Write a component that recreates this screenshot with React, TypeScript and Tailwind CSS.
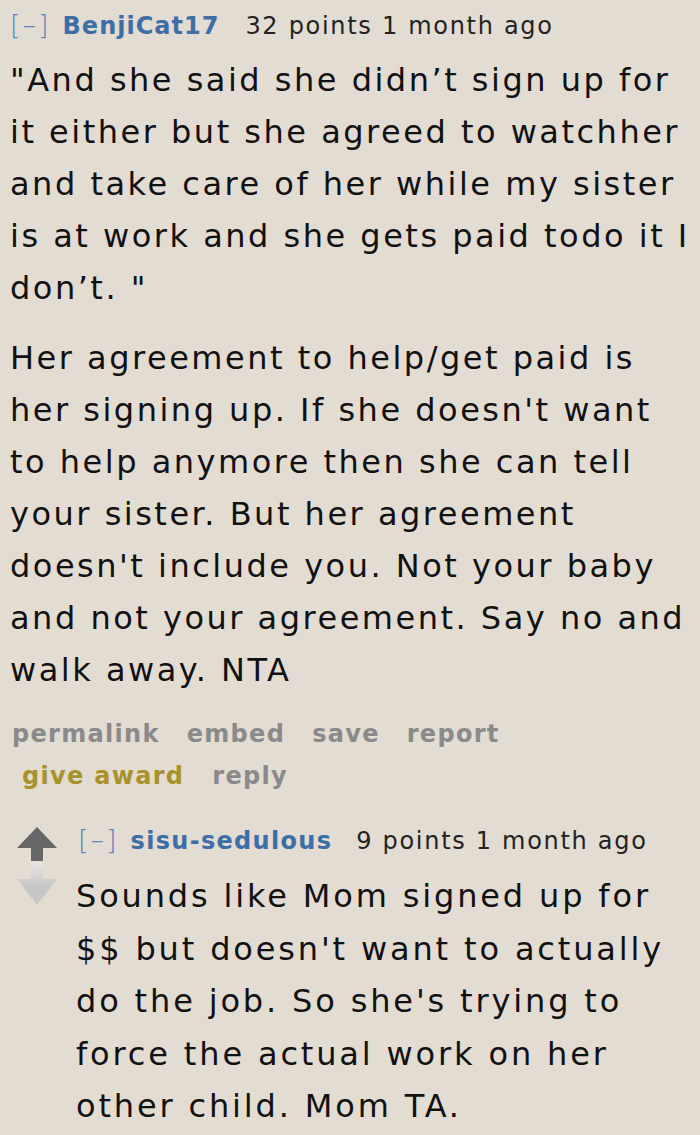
import React from "react";

const p1 = [
  "\"And she said she didn’t sign up for",
  "it either but she agreed to watchher",
  "and take care of her while my sister",
  "is at work and she gets paid todo it I",
  "don’t. \"",
];
const p2 = [
  "Her agreement to help/get paid is",
  "her signing up. If she doesn't want",
  "to help anymore then she can tell",
  "your sister. But her agreement",
  "doesn't include you. Not your baby",
  "and not your agreement. Say no and",
  "walk away. NTA",
];
const p3 = [
  "Sounds like Mom signed up for",
  "$$ but doesn't want to actually",
  "do the job. So she's trying to",
  "force the actual work on her",
  "other child. Mom TA.",
];

function Lines({ lines }: { lines: string[] }) {
  return (
    <div>
      {lines.map((l, i) => (
        <div key={i} className="whitespace-pre">
          {l}
        </div>
      ))}
    </div>
  );
}

export default function App() {
  return (
    <div
      className="w-[700px] h-[1135px] overflow-hidden bg-[#e3dcd3] text-[#111]"
      style={{ fontFamily: '"DejaVu Sans", Verdana, sans-serif' }}
    >
      {/* Parent comment */}
      <div className="pl-[10px] pt-[8px]">
        <div className="flex items-baseline text-[24px] leading-[34px]">
          <span className="text-[#5b87b8] text-[27px] tracking-[2px] font-light">[–]</span>
          <span className="ml-[12px] font-bold text-[24px] text-[#3d6fa6] tracking-[1px]">BenjiCat17</span>
          <span className="ml-[26px] text-[#222] tracking-[1.7px]">32 points 1 month ago</span>
        </div>
        <div className="mt-[11px] text-[32px] leading-[52px] tracking-[2.5px]">
          <Lines lines={p1} />
          <div className="mt-[18px]">
            <Lines lines={p2} />
          </div>
        </div>
        <div className="mt-[17px] text-[24px] leading-[42px] font-bold text-[#8a8a8a] tracking-[1.3px]">
          <div className="flex gap-[27px] pl-[2px]">
            <span>permalink</span>
            <span>embed</span>
            <span>save</span>
            <span>report</span>
          </div>
          <div className="flex gap-[28px] pl-[12px]">
            <span className="text-[#a8922a]">give award</span>
            <span>reply</span>
          </div>
        </div>
      </div>

      {/* Child comment */}
      <div className="flex mt-[30px] pl-[17px]">
        <div className="w-[40px] pt-[0px]">
          <svg width="40" height="80" viewBox="0 0 40 80">
            <defs>
              <linearGradient id="dg" x1="0" y1="0" x2="0" y2="1">
                <stop offset="0" stopColor="#e8e4e0" />
                <stop offset="0.6" stopColor="#c6c6c6" />
                <stop offset="1" stopColor="#c6c6c6" />
              </linearGradient>
            </defs>
            <polygon points="20,0 40,21 26,21 26,34 14,34 14,21 0,21" fill="#666666" />
            <polygon points="14,35 26,35 26,52 40,52 20,78 0,52 14,52" fill="url(#dg)" />
          </svg>
        </div>
        <div className="ml-[21px] -mt-[4px]">
          <div className="flex items-baseline text-[24px] leading-[34px]">
            <span className="text-[#5b87b8] text-[27px] tracking-[2px] font-light">[–]</span>
            <span className="ml-[12px] font-bold text-[24px] text-[#3d6fa6] tracking-[1.3px]">sisu-sedulous</span>
            <span className="ml-[24px] text-[#222] tracking-[1.7px]">9 points 1 month ago</span>
          </div>
          <div className="mt-[12px] text-[32px] leading-[52.5px] tracking-[2.85px] -ml-[2px]">
            <Lines lines={p3} />
          </div>
        </div>
      </div>
    </div>
  );
}
